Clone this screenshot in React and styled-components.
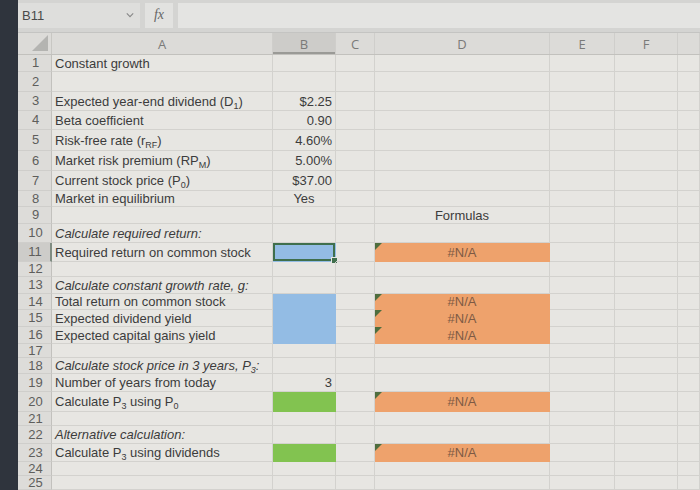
import styled, { createGlobalStyle } from 'styled-components'

const GlobalStyle = createGlobalStyle`
  html, body {
    margin: 0;
    padding: 0;
    width: 700px;
    height: 490px;
    overflow: hidden;
    background: #2f343d;
  }
  body {
    font-family: "Liberation Sans", Arial, sans-serif;
  }
`

const COLS = '34px 221px 63px 39px 175px 65px 63px 1fr'

const FILLS = {
  blue: '#93bce4',
  orange: '#eea26c',
  green: '#82c350',
}

const Sub = styled.sub`
  font-size: 9px;
  vertical-align: -3px;
  line-height: 0;
`

const rows = [
  { n: 1, h: 17, a: 'Constant growth' },
  { n: 2, h: 20 },
  { n: 3, h: 19, a: <>Expected year-end dividend (D<Sub>1</Sub>)</>, b: '$2.25' },
  { n: 4, h: 19, a: 'Beta coefficient', b: '0.90' },
  { n: 5, h: 21, a: <>Risk-free rate (r<Sub>RF</Sub>)</>, b: '4.60%' },
  { n: 6, h: 20, a: <>Market risk premium (RP<Sub>M</Sub>)</>, b: '5.00%' },
  { n: 7, h: 20, a: <>Current stock price (P<Sub>0</Sub>)</>, b: '$37.00' },
  { n: 8, h: 16, a: 'Market in equilibrium', b: 'Yes', bAlign: 'center' },
  { n: 9, h: 17, d: 'Formulas' },
  { n: 10, h: 19, a: 'Calculate required return:', italic: true },
  { n: 11, h: 19, a: 'Required return on common stock', bFill: 'blue', d: '#N/A', dFill: 'orange', selected: true },
  { n: 12, h: 15 },
  { n: 13, h: 17, a: 'Calculate constant growth rate, g:', italic: true },
  { n: 14, h: 16, a: 'Total return on common stock', bFill: 'blue', d: '#N/A', dFill: 'orange' },
  { n: 15, h: 17, a: 'Expected dividend yield', bFill: 'blue', d: '#N/A', dFill: 'orange' },
  { n: 16, h: 17, a: 'Expected capital gains yield', bFill: 'blue', d: '#N/A', dFill: 'orange' },
  { n: 17, h: 14 },
  { n: 18, h: 16, a: <>Calculate stock price in 3 years, P<Sub>3</Sub>:</>, italic: true },
  { n: 19, h: 18, a: 'Number of years from today', b: '3' },
  { n: 20, h: 20, a: <>Calculate P<Sub>3</Sub> using P<Sub>0</Sub></>, bFill: 'green', d: '#N/A', dFill: 'orange' },
  { n: 21, h: 14 },
  { n: 22, h: 18, a: 'Alternative calculation:', italic: true },
  { n: 23, h: 18, a: <>Calculate P<Sub>3</Sub> using dividends</>, bFill: 'green', d: '#N/A', dFill: 'orange' },
  { n: 24, h: 14 },
  { n: 25, h: 14 },
]

const headers = ['A', 'B', 'C', 'D', 'E', 'F', '']

export default function App() {
  return (
    <>
      <GlobalStyle />
      <Screen>
        <Bezel />
        <Window>
          <FormulaBar>
            <NameBox>
              <span>B11</span>
              <Chevron viewBox="0 0 10 6" width="8" height="6">
                <path d="M1 1 L5 5 L9 1" fill="none" stroke="#888" strokeWidth="1.4" />
              </Chevron>
            </NameBox>
            <FxBox>fx</FxBox>
            <FormulaInput />
          </FormulaBar>

          <Sheet>
            <HeaderRow>
              <Corner>
                <CornerTriangle viewBox="0 0 16 16" width="16" height="16">
                  <polygon points="16,0 16,16 0,16" fill="#b4b4b1" />
                </CornerTriangle>
              </Corner>
              {headers.map((h, i) => (
                <ColHeader key={i} $active={h === 'B'}>{h}</ColHeader>
              ))}
            </HeaderRow>

            {rows.map((r) => (
              <Row key={r.n} style={{ height: r.h }}>
                <RowNum $active={r.selected}>{r.n}</RowNum>
                <Cell $italic={r.italic}><CellText>{r.a}</CellText></Cell>
                <Cell $align={r.bAlign || 'right'} $fill={FILLS[r.bFill]} $selected={r.selected}>
                  <CellText>{r.b}</CellText>
                </Cell>
                <Cell />
                <Cell $align="center" $fill={FILLS[r.dFill]} $error={!!r.dFill} $muted={!!r.dFill}>
                  <CellText>{r.d}</CellText>
                </Cell>
                <Cell />
                <Cell />
                <Cell />
              </Row>
            ))}
          </Sheet>
        </Window>
      </Screen>
    </>
  )
}

const Screen = styled.div`
  display: flex;
  width: 700px;
  height: 490px;
`

const Bezel = styled.div`
  width: 18px;
  flex-shrink: 0;
  background: #2f343d;
`

const Window = styled.div`
  flex: 1;
  display: flex;
  flex-direction: column;
  background: #e7e6e2;
  overflow: hidden;
`

const FormulaBar = styled.div`
  height: 33px;
  flex-shrink: 0;
  display: flex;
  align-items: center;
  gap: 5px;
  padding: 0 0 2px 0;
  box-sizing: border-box;
  background: #d4d4d2;
  border-bottom: 1px solid #c4c4c2;
`

const NameBox = styled.div`
  width: 122px;
  height: 25px;
  display: flex;
  align-items: center;
  justify-content: space-between;
  padding: 0 6px 0 4px;
  box-sizing: border-box;
  background: #dededc;
  color: #4a4a4a;
  font-size: 13px;
`

const Chevron = styled.svg`
  display: block;
`

const FxBox = styled.div`
  width: 28px;
  height: 25px;
  display: flex;
  align-items: center;
  justify-content: center;
  background: #e2e2e0;
  color: #666;
  font-family: "Liberation Serif", "Times New Roman", serif;
  font-style: italic;
  font-size: 14px;
`

const FormulaInput = styled.div`
  flex: 1;
  height: 25px;
  background: #e4e4e2;
`

const Sheet = styled.div`
  display: flex;
  flex-direction: column;
`

const HeaderRow = styled.div`
  display: grid;
  grid-template-columns: ${COLS};
  height: 22px;
  background: #dcdbd8;
  border-bottom: 1px solid #c2c1bd;
  box-sizing: border-box;
`

const Corner = styled.div`
  display: flex;
  align-items: flex-end;
  justify-content: flex-end;
  padding: 0 3px 3px 0;
  border-right: 1px solid #c8c7c3;
`

const CornerTriangle = styled.svg`
  display: block;
`

const ColHeader = styled.div`
  display: flex;
  align-items: center;
  justify-content: center;
  font-family: "Open Sans", "Liberation Sans", sans-serif;
  font-size: 13px;
  color: #7a7a78;
  border-right: 1px solid #cfcecb;
  background: ${(p) => (p.$active ? '#cdccc9' : 'transparent')};
  box-shadow: ${(p) => (p.$active ? 'inset 0 -2px 0 #9a9a96' : 'none')};
`

const Row = styled.div`
  display: grid;
  grid-template-columns: ${COLS};
`

const RowNum = styled.div`
  display: flex;
  align-items: center;
  justify-content: center;
  padding-left: 2px;
  font-size: 13px;
  line-height: 12px;
  overflow: hidden;
  color: #5e5e5c;
  background: ${(p) => (p.$active ? '#cdccc9' : '#dddcd9')};
  border-right: ${(p) => (p.$active ? '2px solid #7f8c82' : '1px solid #c2c1bd')};
  border-bottom: 1px solid #cfcecb;
`

const Cell = styled.div`
  position: relative;
  display: flex;
  align-items: center;
  justify-content: ${(p) => (p.$align === 'right' ? 'flex-end' : p.$align === 'center' ? 'center' : 'flex-start')};
  padding: 0 3px;
  min-width: 0;
  white-space: nowrap;
  font-size: 13px;
  font-style: ${(p) => (p.$italic ? 'italic' : 'normal')};
  color: ${(p) => (p.$muted ? '#7d5a44' : '#3c3c3c')};
  background: ${(p) => p.$fill || 'transparent'};
  border-right: 1px solid ${(p) => p.$fill || '#d3d2ce'};
  border-bottom: 1px solid ${(p) => p.$fill || '#d3d2ce'};

  &::before {
    content: '';
    display: ${(p) => (p.$error ? 'block' : 'none')};
    position: absolute;
    top: 0;
    left: 0;
    border-top: 7px solid #4e6e3e;
    border-right: 7px solid transparent;
  }

  ${(p) =>
    p.$selected &&
    `
    box-shadow: inset 0 0 0 2px #3f6f4c;
    &::after {
      content: '';
      position: absolute;
      right: -3px;
      bottom: -3px;
      width: 5px;
      height: 5px;
      background: #3f6f4c;
      border: 1px solid #e7e6e2;
    }
  `}
`

const CellText = styled.span`
  line-height: 13px;
`
